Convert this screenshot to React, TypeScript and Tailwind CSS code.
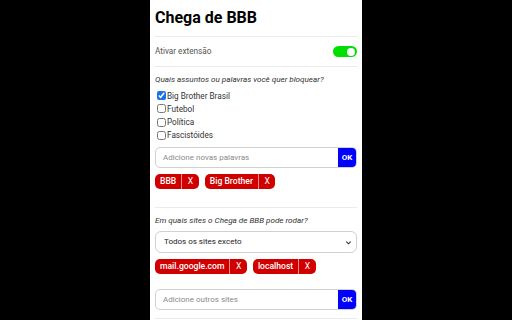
import React from "react";

function Tag({ label }: { label: string }) {
  return (
    <div className="flex h-[15px] items-stretch rounded-[5px] bg-[#d00000] text-white text-[8.6px] leading-none">
      <span className="flex items-center px-[5px] font-medium">{label}</span>
      <span className="flex w-[17.5px] items-center justify-center border-l border-[#f09090]">X</span>
    </div>
  );
}

function Check({ label, checked }: { label: string; checked?: boolean }) {
  return (
    <label className="flex h-[13.3px] items-center text-[8.2px] text-[#333]">
      <input type="checkbox" defaultChecked={checked} className="m-0 ml-[2px] mr-[1px] h-[9px] w-[9px] accent-[#1a73e8]" />
      <span>{label}</span>
    </label>
  );
}

function AddInput({ placeholder }: { placeholder: string }) {
  return (
    <div className="flex h-[21px] overflow-hidden rounded-[5px] border border-[#d0d0d0]">
      <div className="flex flex-1 items-center pl-[7px] text-[8px] text-[#8a8a8a]">{placeholder}</div>
      <div className="flex w-[18px] items-center justify-center bg-[#0000ff] text-[8px] font-bold text-white">OK</div>
    </div>
  );
}

export default function App() {
  return (
    <div className="flex h-[320px] w-[512px] justify-center bg-black" style={{ fontFamily: "Roboto, 'Liberation Sans', sans-serif" }}>
      <div className="w-[212px] overflow-hidden bg-white px-[5px] pt-[8px]">
        <h1 className="text-[16px] font-bold leading-[20px] text-black">Chega de BBB</h1>
        <div className="mt-[8px] border-t border-[#ebebeb]" />
        <div className="flex h-[29px] items-center justify-between">
          <span className="text-[8.2px] text-[#555]">Ativar extensão</span>
          <div className="flex h-[11px] w-[24px] items-center justify-end rounded-full bg-[#00e000] pr-[2px]">
            <div className="h-[8px] w-[8px] rounded-full bg-white" />
          </div>
        </div>
        <div className="border-t border-[#ebebeb]" />
        <p className="mt-[6px] text-[8.1px] leading-[12px] italic text-[#333]">Quais assuntos ou palavras você quer bloquear?</p>
        <div className="mt-[4px] flex flex-col">
          <Check label="Big Brother Brasil" checked />
          <Check label="Futebol" />
          <Check label="Política" />
          <Check label="Fascistóides" />
        </div>
        <div className="mt-[5px]">
          <AddInput placeholder="Adicione novas palavras" />
        </div>
        <div className="mt-[6px] flex gap-[6px]">
          <Tag label="BBB" />
          <Tag label="Big Brother" />
        </div>
        <div className="mt-[18px] border-t border-[#ebebeb]" />
        <p className="mt-[6px] text-[8.1px] leading-[12px] italic text-[#333]">Em quais sites o Chega de BBB pode rodar?</p>
        <div className="mt-[5px] flex h-[22px] items-center justify-between rounded-[6px] border border-[#d0d0d0] pl-[8px] pr-[4px] text-[8px] text-[#222]">
          <span>Todos os sites exceto</span>
          <svg width="7" height="7" viewBox="0 0 8 8"><path d="M1.5 3 L4 5.5 L6.5 3" fill="none" stroke="#333" strokeWidth="1.3" /></svg>
        </div>
        <div className="mt-[6px] flex gap-[6px]">
          <Tag label="mail.google.com" />
          <Tag label="localhost" />
        </div>
        <div className="mt-[15px]">
          <AddInput placeholder="Adicione outros sites" />
        </div>
        <div className="mt-[8px] border-t border-[#ebebeb]" />
      </div>
    </div>
  );
}
